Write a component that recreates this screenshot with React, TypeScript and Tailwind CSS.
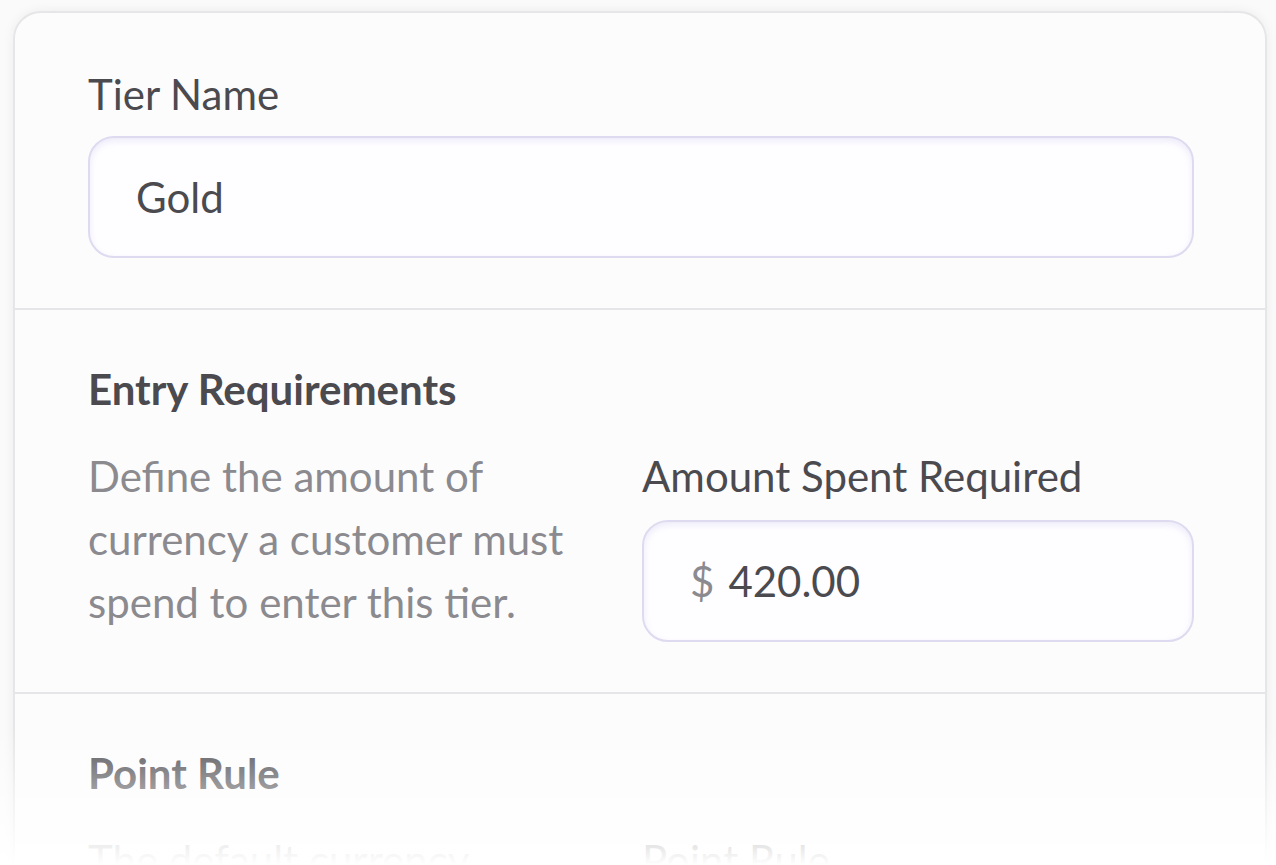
import React from "react";

const font = { fontFamily: "Lato, 'Noto Sans', sans-serif" };

function Input({ children }: { children: React.ReactNode }) {
  return (
    <div className="flex h-[122px] items-center rounded-[26px] border-2 border-[#dedaf0] bg-[#fefdff] px-[46px] shadow-[inset_0_3px_6px_rgba(160,150,220,0.18)]">
      {children}
    </div>
  );
}

export default function App() {
  return (
    <div style={font} className="relative h-[865px] overflow-hidden bg-[#fafafa] pl-[13px] pr-[9px] pt-[11px]">
      <div className="rounded-t-[28px] border-2 border-[#e6e6e8] bg-[#fdfcfd] shadow-[0_0_12px_rgba(0,0,0,0.06)]">
        <section className="pb-[50px] pl-[73px] pr-[71px] pt-[50px]">
          <div className="text-[42px] leading-[63px] text-[#4b4a4f]">Tier Name</div>
          <div className="mt-[10px]">
            <Input>
              <span className="text-[42px] leading-[63px] text-[#4b4a4f]">Gold</span>
            </Input>
          </div>
        </section>
        <section className="border-t-2 border-[#e6e6e8] pb-[50px] pl-[73px] pr-[71px] pt-[48px]">
          <div className="text-[42px] font-bold leading-[63px] text-[#4b4a4f]">Entry Requirements</div>
          <div className="mt-[24px] grid grid-cols-[1fr_552px] gap-[40px]">
            <p className="text-[42px] leading-[63px] text-[#8b8a8f]">
              Define the amount of currency a customer must spend to enter this tier.
            </p>
            <div>
              <div className="text-[42px] leading-[63px] text-[#4b4a4f]">Amount Spent Required</div>
              <div className="mt-[12px]">
                <Input>
                  <span className="text-[42px] leading-[63px] text-[#8b8a8f]">$</span>
                  <span className="ml-[14px] text-[42px] leading-[63px] text-[#4b4a4f]">420.00</span>
                </Input>
              </div>
            </div>
          </div>
        </section>
        <section className="border-t-2 border-[#e6e6e8] pb-[48px] pl-[73px] pr-[71px] pt-[48px]">
          <div className="text-[42px] font-bold leading-[63px] text-[#4b4a4f]">Point Rule</div>
          <div className="mt-[24px] grid grid-cols-[1fr_552px] gap-[40px]">
            <p className="text-[42px] leading-[63px] text-[#8b8a8f]">
              The default currency conversion rate for points.
            </p>
            <div className="text-[42px] leading-[63px] text-[#4b4a4f]">Point Rule</div>
          </div>
        </section>
      </div>
      <div className="pointer-events-none absolute bottom-0 left-0 right-0 h-[140px] bg-linear-to-b from-white/0 to-white" />
    </div>
  );
}
